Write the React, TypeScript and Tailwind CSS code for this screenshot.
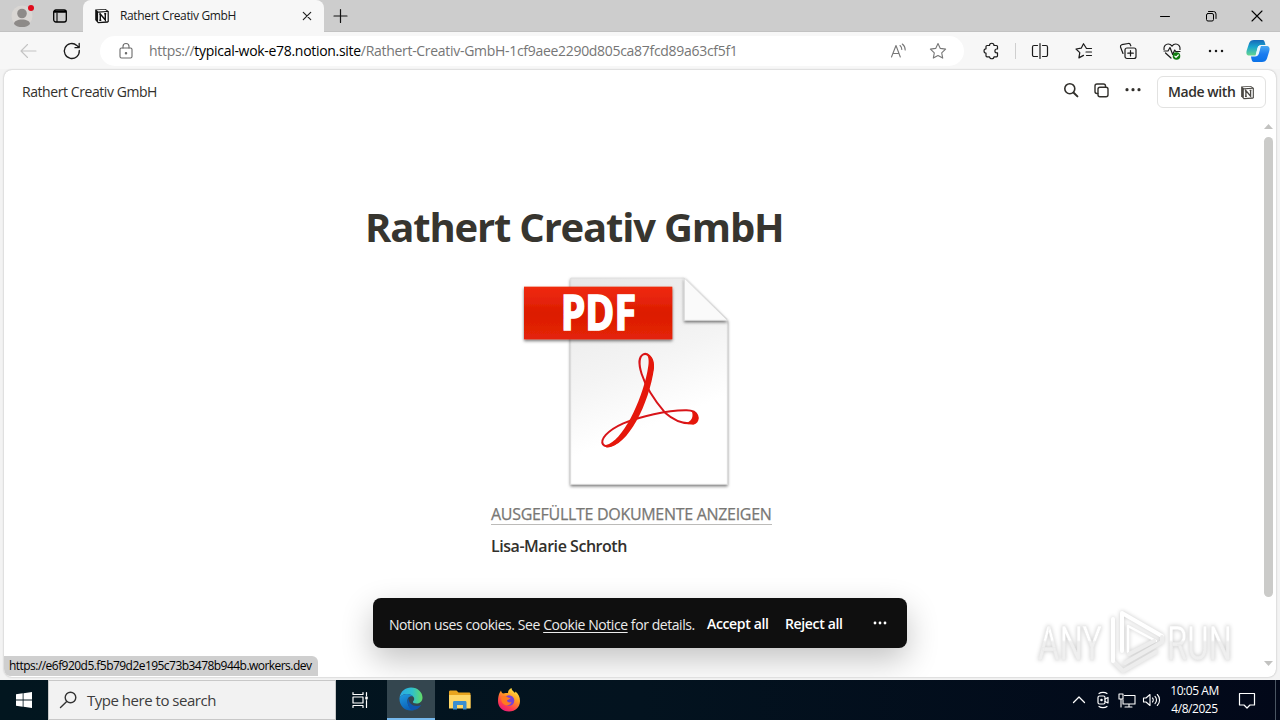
import React from "react";

type IconProps = { className?: string; children: React.ReactNode; w?: number; h?: number; sw?: number };

function Icon({ className = "", children, w = 20, h = 20, sw = 1.1 }: IconProps) {
  return (
    <svg
      className={"shrink-0 " + className}
      width={w}
      height={h}
      viewBox={`0 0 ${w} ${h}`}
      fill="none"
      stroke="currentColor"
      strokeWidth={sw}
      strokeLinecap="round"
      strokeLinejoin="round"
    >
      {children}
    </svg>
  );
}

function NotionMark({ size, ink }: { size: number; ink: string }) {
  return (
    <svg width={size} height={size} viewBox="0 0 16 16" className="shrink-0">
      <path d="M1.2 1.6 11.6 1l3.2 2.2v10.6l-1.2.9-9.6.6-2.8-3.2z" fill={ink} />
      <path d="M2.6 2.3 11.2 1.8l1.6 1.1-8.6.5z" fill="#fff" />
      <path d="M4.1 4.7 13.6 4.1v9.2l-9.5.6z" fill="#fff" />
      <path d="M6.3 12.2V6l5 6V5.6M5.2 6.1h1.6M10.2 5.7h2M5.3 12.2h2" stroke={ink} strokeWidth="1.4" fill="none" />
    </svg>
  );
}

function TabStrip() {
  return (
    <div className="flex h-8 shrink-0 border-b border-[#c2c2c2] bg-[#cdcdcd]">
      <div className="flex w-[83px] items-center rounded-br-lg pl-[11px]">
        <svg width="26" height="28" viewBox="0 0 26 28" className="shrink-0">
          <circle cx="11" cy="14" r="10.5" fill="#d9d6d3" />
          <circle cx="11" cy="11.5" r="4.8" fill="#8d8a88" />
          <path d="M3 22c0-3 3.5-4.5 8-4.5s8 1.500 8 4.500c-2 2.500-5 3-8 3s-6-.5-8-3z" fill="#8d8a88" />
          <circle cx="20" cy="6" r="3" fill="#e00b1c" />
        </svg>
        <Icon w={16} h={16} sw={1.3} className="ml-[15px] text-black">
          <rect x="1.700" y="2" width="12.600" height="12" rx="2.200" />
          <path d="M2.500 3.800h11" strokeWidth="2" />
          <path d="M5 5v8.500" strokeWidth="1.100" />
        </Icon>
      </div>
      <div className="flex h-8 w-[241px] items-center rounded-t-lg bg-[#f7f7f7] pl-[11px]">
        <NotionMark size={16} ink="#111" />
        <span className="ml-[10px] w-[170px] whitespace-nowrap text-[12px] leading-8 tracking-[-0.35px] text-[#1a1a1a]">
          Rathert Creativ GmbH
        </span>
        <Icon w={12} h={12} sw={1.2} className="ml-[11px] text-[#222]">
          <path d="M2.300 2.300l7.400 7.400M9.700 2.300L2.300 9.700" />
        </Icon>
      </div>
      <Icon w={16} h={16} sw={1.2} className="ml-2 mt-2 text-[#111]">
        <path d="M8.500 1.500v13M2 8h13" />
      </Icon>
      <div className="ml-auto flex items-center text-black">
        <Icon w={46} h={16} sw={1}>
          <path d="M18.500 8.500h9" />
        </Icon>
        <Icon w={46} h={16} sw={1}>
          <rect x="18.500" y="5.500" width="7" height="7.500" rx="1.500" />
          <path d="M20.500 3.500h5a2.500 2.500 0 0 1 2.500 2.500v4.500" />
        </Icon>
        <Icon w={46} h={16} sw={1.1}>
          <path d="M18 3l10 10M28 3L18 13" />
        </Icon>
      </div>
    </div>
  );
}

function Toolbar() {
  return (
    <div className="flex h-[37px] shrink-0 items-center bg-[#f7f7f7] text-[#1b1b1b]">
      <Icon className="ml-[18px] text-[#c4c4c4]">
        <path d="M18 10H3M9.500 3.500L3 10l6.500 6.500" />
      </Icon>
      <Icon className="ml-6 text-[#1b1b1b]" sw={1.3}>
        <path d="M17.300 9.500a7.500 7.500 0 1 1-2.500-5.100L17 6.500M17.200 2.500v4.200h-4.200" />
      </Icon>
      <div className="ml-[18px] flex h-[30px] w-[864px] items-center rounded-full bg-white">
        <Icon className="ml-4 text-[#6b6b6b]">
          <rect x="4" y="7" width="12" height="10" rx="1.500" />
          <path d="M7 7V5.500a3 3 0 0 1 6 0V7" />
          <circle cx="10" cy="12.300" r=".7" fill="currentColor" />
        </Icon>
        <span className="ml-[13px] w-[600px] whitespace-nowrap text-[14px] tracking-[-0.3px] text-[#767676]">
          https://<span className="text-black">typical-wok-e78.notion.site</span>
          /Rathert-Creativ-GmbH-1cf9aee2290d805ca87fcd89a63cf5f1
        </span>
        <Icon className="ml-auto text-[#777]">
          <path d="M3.500 16L8 4.500 12.300 16M5 12.500h6M12 4.500c1.200 1 1.800 2.300 1.800 4M14.300 3c1.900 1.500 2.900 3.500 2.900 6" />
        </Icon>
        <Icon className="ml-5 mr-4 text-[#777]">
          <path d="M10 2.500l2.300 4.900 5.300.7-3.900 3.700 1 5.300L10 14.500l-4.700 2.600 1-5.300-3.900-3.700 5.300-.7z" />
        </Icon>
      </div>
      <Icon className="ml-[18px]" sw={1.2}>
        <path d="M5 4.500h2.500c0-3 4.500-3 4.500 0h2.500a1 1 0 0 1 1 1V8h-.7a1.900 1.900 0 0 0 0 3.800h.7v3a1 1 0 0 1-1 1H12c0 2.600-4.500 2.600-4.500 0H5a1 1 0 0 1-1-1v-2.600c-2.600 0-2.600-4.400 0-4.400V5.500a1 1 0 0 1 1-1z" />
      </Icon>
      <div className="ml-[13px] h-4 w-px bg-[#cfcfcf]" />
      <Icon className="ml-[14px]" sw={1.2}>
        <path d="M7.500 4.500H4a1.500 1.500 0 0 0-1.500 1.500v8a1.500 1.500 0 0 0 1.500 1.500h3.500M12.500 4.500H16a1.500 1.500 0 0 1 1.500 1.500v8a1.500 1.500 0 0 1-1.500 1.500h-3.500M10 2.500v15" />
      </Icon>
      <Icon className="ml-6" sw={1.2}>
        <path d="M17.500 7.500h-5L9.500 2.700 7.200 7.200l-5.200.8 3.800 3.600-.9 5.300 4.600-2.500M12 11h5.500M12.500 14.500h5" />
      </Icon>
      <Icon className="ml-6" sw={1.2}>
        <rect x="7" y="7" width="11" height="10.500" rx="2" />
        <path d="M12.500 9.500v5.500M9.800 12.200h5.500M5 12.500l-2.500-6.500a2 2 0 0 1 1.300-2.300l6.500-1.200a2 2 0 0 1 2.200 1.500l.3.800" />
      </Icon>
      <Icon className="ml-6" sw={1.2}>
        <path d="M2 8.500C1.500 5 4 3 6.200 3 8 3 9.200 4 10 5.200 10.800 4 12 3 13.800 3 16 3 18.500 5 18 8.500M3.500 12l5.500 5M2 10h4l2-3.500 2.700 7 2-4.500 1 1.500H18" />
        <circle cx="14.500" cy="15" r="3.800" fill="#107c10" stroke="none" />
        <path d="M12.800 15.200l1.200 1.200 2.300-2.400" stroke="#fff" />
      </Icon>
      <Icon className="ml-6">
        <path d="M4 10h.01M10 10h.01M16 10h.01" strokeWidth="2.500" />
      </Icon>
      <svg width="26" height="26" viewBox="0 0 26 26" className="ml-[19px] shrink-0">
        <defs>
          <linearGradient id="cpA" x1="0" y1="0" x2="0" y2="1">
            <stop offset="0" stopColor="#1668b8" />
            <stop offset=".45" stopColor="#19a5ce" />
            <stop offset="1" stopColor="#67d68f" />
          </linearGradient>
          <linearGradient id="cpB" x1="0" y1="0" x2="0" y2="1">
            <stop offset="0" stopColor="#48a8f2" />
            <stop offset=".5" stopColor="#1c7cf0" />
            <stop offset="1" stopColor="#0a72e8" />
          </linearGradient>
        </defs>
        <path d="M9 2h8.500c2 0 2.300 2 3 5H16c-2.500 0-3 2-3.800 5l-1.700 5.500H4.500c-3 0-3.500-2-2.800-5L4 5.500C4.800 3 6.500 2 9 2z" fill="url(#cpA)" />
        <path d="M17 24H9c-2 0-2.500-2-3-5.500h4c2.500 0 3-2 3.800-4.500L15.500 8H21c3.500 0 4 2 3.300 5L22 20.500c-.8 2.500-2.500 3.500-5 3.500z" fill="url(#cpB)" />
        <path d="M15.800 8h-1.800c-1.300 0-1.600 1.500-3.200 9.500h1.500c1.300 0 1.600-1.500 3.500-9.500z" fill="#e9f7ff" />
      </svg>
    </div>
  );
}

function PdfPicture() {
  return (
    <svg width="250" height="240" viewBox="0 0 750 720" className="ml-[500px] shrink-0">
      <defs>
        <linearGradient id="sheet" x1="0" y1="0" x2="0.300" y2="1">
          <stop offset="0" stopColor="#e7e7e7" />
          <stop offset=".5" stopColor="#f4f4f4" />
          <stop offset=".8" stopColor="#fff" />
        </linearGradient>
        <linearGradient id="band" x1="0" y1="0" x2="0" y2="1">
          <stop offset="0" stopColor="#f02a10" />
          <stop offset=".5" stopColor="#dc1c02" />
          <stop offset="1" stopColor="#e42408" />
        </linearGradient>
        <filter id="soft" x="-10%" y="-10%" width="120%" height="125%">
          <feDropShadow dx="0" dy="5" stdDeviation="4" floodColor="#000" floodOpacity=".55" />
        </filter>
      </defs>
      <path d="M212 54H552L682 181V673H212z" fill="url(#sheet)" stroke="#d8d8d8" strokeWidth="2" filter="url(#soft)" />
      <path d="M553 54L682 181H553z" fill="#fafafa" stroke="#d4d4d4" strokeWidth="2" filter="url(#soft)" />
      <rect x="72" y="80" width="445" height="158" fill="url(#band)" filter="url(#soft)" />
      <text
        x="182"
        y="211"
        textLength="226"
        lengthAdjust="spacingAndGlyphs"
        fontFamily="Open Sans, sans-serif"
        fontWeight="700"
        fontSize="144"
        fill="#fff"
        stroke="#fff"
        strokeWidth="5"
      >
        PDF
      </text>
      <g fill="#e5170b">
        <path
          d="M330 558C365 555 440 420 457 330 462 290 440 278 430 283 405 295 420 370 495 458 530 488 560 492 580 488 600 480 598 452 560 451 500 450 420 470 370 490 320 512 300 540 309 553 314 560 325 560 330 558z"
          fill="none"
          stroke="#d81419"
          strokeWidth="6"
        />
        <path d="M318 562C382 566 448 430 462 325 464 300 455 284 438 280 449 292 447 312 442 335 424 425 368 543 318 555z" />
        <path d="M555 491C575 484 582 470 575 452 602 461 602 488 580 494z" />
      </g>
    </svg>
  );
}

function Watermark() {
  return (
    <svg width="244" height="74" viewBox="0 0 244 74" className="absolute bottom-0 right-0 [filter:drop-shadow(0_0_2px_rgba(0,0,0,0.22))]">
      <defs>
        <linearGradient id="wm" gradientUnits="userSpaceOnUse" x1="0" y1="18" x2="0" y2="56">
          <stop offset=".5" stopColor="#fff" />
          <stop offset=".55" stopColor="#efefef" />
        </linearGradient>
      </defs>
      <g fontFamily="Roboto, sans-serif" fontSize="49" fill="url(#wm)" stroke="#e8e8e8" strokeWidth=".5">
        <text x="6" y="57" textLength="64" lengthAdjust="spacingAndGlyphs">ANY</text>
        <text x="135" y="57" textLength="65" lengthAdjust="spacingAndGlyphs">RUN</text>
      </g>
      <g fill="none" stroke="#fff" strokeWidth="4" strokeLinejoin="round" strokeLinecap="round">
        <path d="M90 48V10l40 23" />
        <path d="M96 49V23l28 15" strokeWidth="2.500" />
        <path d="M130 34v5L93 60M122 38L97 51M81 16v42l10 10 33-19" stroke="#ededed" />
        <path d="M81 16v42" />
      </g>
    </svg>
  );
}

function PageHeader() {
  return (
    <div className="flex h-[45px] shrink-0 items-start text-[#32302c]">
      <span className="ml-[18px] mt-3 whitespace-nowrap text-[14px] leading-5 tracking-[-0.43px]">Rathert Creativ GmbH</span>
      <div className="ml-auto flex pt-[10px]">
        <Icon sw={1.6}>
          <circle cx="8.800" cy="8.700" r="5" />
          <path d="M12.700 12.700l3.700 3.700" strokeWidth="2" />
        </Icon>
        <Icon className="ml-[10px]" sw={1.4}>
          <rect x="7" y="7.200" width="10" height="9.600" rx="2" />
          <path d="M6.800 13.500H6a2 2 0 0 1-2-2V6a2 2 0 0 1 2-2h6.500a2 2 0 0 1 2 2v1" />
        </Icon>
        <Icon className="ml-3">
          <path d="M4 9.700h.01M10 9.700h.01M16 9.700h.01" strokeWidth="3.200" />
        </Icon>
      </div>
      <div className="ml-[14px] mr-[10px] mt-[6px] flex h-8 w-[109px] items-center rounded-md border border-[#e2e2e1] pl-[10px]">
        <span className="mb-px w-[69px] whitespace-nowrap text-[14px] font-semibold tracking-[-0.42px]">Made with</span>
        <span className="ml-[3px]"><NotionMark size={15} ink="#4a4844" /></span>
      </div>
    </div>
  );
}

function CookieBar() {
  return (
    <div className="absolute left-[369px] top-[528px] flex h-[50px] w-[534px] items-center whitespace-nowrap rounded-lg bg-[#0f0f0f] pl-4 text-[14px] text-white shadow-[0_12px_32px_rgba(0,0,0,0.24)]">
      <span className="mt-[2px] w-[318px] tracking-[-0.43px] text-[#ececec]">
        Notion uses cookies. See <span className="underline underline-offset-2">Cookie Notice</span> for details.
      </span>
      <span className="w-[78px] font-semibold tracking-[-0.35px]">Accept all</span>
      <span className="w-[85px] font-semibold tracking-[-0.35px]">Reject all</span>
      <Icon w={20} h={20}>
        <path d="M5 10h.01M10 10h.01M15 10h.01" strokeWidth="2.800" />
      </Icon>
    </div>
  );
}

function PageView() {
  return (
    <div className="flex h-[611px] shrink-0 flex-col bg-[#f3f3f3] px-1 pb-[3px] pt-px">
      <div className="relative flex h-[607px] flex-col overflow-hidden rounded-lg bg-white shadow-[0_0_2px_rgba(0,0,0,0.3)]">
        <PageHeader />
        <div className="flex flex-1">
          <div className="-ml-1 flex flex-1 flex-col">
            <h1 className="ml-[365px] mt-[84px] h-[56px] whitespace-nowrap text-[40px] font-bold leading-[56px] tracking-[-1.18px] text-[#37352f]">
              Rathert Creativ GmbH
            </h1>
            <div className="mt-[5px] flex"><PdfPicture /></div>
            <div className="ml-[491px] mt-1 flex flex-col items-start whitespace-nowrap text-[16px] leading-[20px]">
              <span className="border-b border-[#bcbbb9] font-medium tracking-[-0.3px] text-[#787774] [-webkit-text-stroke:0.25px_#787774]">AUSGEFÜLLTE DOKUMENTE ANZEIGEN</span>
              <span className="mt-[11px] font-semibold tracking-[-0.46px] text-[#32302c]">Lisa-Marie Schroth</span>
            </div>
          </div>
          <div className="mr-[3px] flex w-[9px] flex-col items-center pt-[9px] text-[#c2c2c0]">
            <svg width="9" height="5" className="fill-current"><path d="M0 5l4.500-5L9 5z" /></svg>
            <div className="mt-2 h-[460px] w-[9px] rounded-full bg-[#cbcbc9]" />
            <svg width="9" height="5" className="mt-[64px] fill-current"><path d="M0 0h9L4.500 5z" /></svg>
          </div>
        </div>
        <CookieBar />
        <div className="absolute bottom-px left-0 h-5 w-[314px] whitespace-nowrap rounded-bl-md rounded-tr-md bg-[#cfcfcf] pl-[5px] text-[12px] leading-5 tracking-[-0.54px] text-black">
          https://e6f920d5.f5b79d2e195c73b3478b944b.workers.dev
        </div>
        <Watermark />
      </div>
    </div>
  );
}

function EdgeLogo() {
  return (
    <svg width="24" height="24" viewBox="0 0 24 24">
      <defs>
        <linearGradient id="edT" x1="0" y1="0.500" x2="1" y2="0.500">
          <stop offset="0" stopColor="#2aa9e6" />
          <stop offset=".55" stopColor="#2fc0cc" />
          <stop offset="1" stopColor="#62dc66" />
        </linearGradient>
        <linearGradient id="edL" x1="0" y1="0" x2="0.400" y2="1">
          <stop offset="0" stopColor="#209be0" />
          <stop offset="1" stopColor="#0b62b8" />
        </linearGradient>
      </defs>
      <path d="M.5 11C1.500 4 6.500.5 12 .5c7 0 11.500 5 11.500 10 0 4-3 6-6 6-2.500 0-4-1-3.500-2 1-1 1.500-2 1-3.700C14 8.500 11 7 8 7 4 7 1.500 9 .5 11z" fill="url(#edT)" />
      <path d="M.5 11C2 8.500 5 7 8 7c3 0 5 1 6 2.500C9.500 8.500 8 12 8.500 15c.5 4 3 7.500 7 8-8 2.500-15.500-3-15-12z" fill="url(#edL)" />
      <path d="M9.500 11c-1.500 2.500-1.500 8 3 12 4 .5 8-1.500 9.700-5-3.200 1.700-8.200 1.300-10.700-1.500-1.500-1.700-2-3.500-2-5.500z" fill="#0f56ae" />
    </svg>
  );
}

function Firefox() {
  return (
    <svg width="24" height="24" viewBox="0 0 24 24">
      <defs>
        <linearGradient id="ffx" x1="0.800" y1="0" x2="0.250" y2="1">
          <stop offset="0" stopColor="#fff04a" />
          <stop offset=".4" stopColor="#ff9a22" />
          <stop offset=".75" stopColor="#ff3d4e" />
          <stop offset="1" stopColor="#e8177e" />
        </linearGradient>
      </defs>
      <path d="M2.500 5c1-1.500 1-2 1.500-2.500.5 2 1 2.500 2 3C8 4.500 10 5 11 5c0-2 1-4 3.500-5 0 2.500 2 3 3.500 5l.5-1.500C21.500 6 23 9 23 13c0 6-4.500 10.500-11 10.500S1 19 1 13c0-3 .5-6 1.500-8z" fill="url(#ffx)" />
      <circle cx="12" cy="12.500" r="5.300" fill="#7542d5" />
      <path d="M4.500 9c2-1.500 5-1 6.500.5l2.500.5c-.5 1.500-3 1.500-3.500 2.500 0 1.500 2 2.500 4.500 1.500-1 3-4 4-6.500 3-3-1-4.500-5-3.500-8z" fill="#ff7a20" />
    </svg>
  );
}

function Taskbar() {
  return (
    <div className="flex h-10 shrink-0 items-center bg-[linear-gradient(90deg,#02161f,#03131f_50%,#020819)] text-white">
      <div className="flex w-12 justify-center">
        <svg width="16" height="16" viewBox="0 0 16 16" fill="#fff">
          <path d="M0 2.200L6.700 1.300V7.600H0zM7.500 1.200L16 0v7.600H7.500zM0 8.400h6.700v6.300L0 13.800zM7.500 8.400H16V16l-8.500-1.200z" />
        </svg>
      </div>
      <div className="flex h-10 w-72 items-center border border-[#c8c8c8] bg-[#f2f2f2] pl-[9px] text-[#333]">
        <Icon w={20} h={20} sw={1.4}>
          <circle cx="12.500" cy="7.500" r="5.300" />
          <path d="M8.700 11.500L2.500 17.500" />
        </Icon>
        <span className="ml-[9px] whitespace-nowrap text-[15px] tracking-[-0.48px] text-[#3d3d3d]">Type here to search</span>
      </div>
      <div className="flex w-[51px] pl-[15px]">
        <Icon w={18} h={18} sw={1.2}>
          <path d="M2 1.500v2h10v-2M2 16.500v-2h10v2M15.500 1.500v3M15.500 9.500v7" />
          <rect x="2" y="6" width="10" height="6" />
          <path d="M15.500 6.500v1" strokeWidth="2.500" />
        </Icon>
      </div>
      <div className="flex h-10 w-12 items-center justify-center border-b-2 border-[#76b9ed] bg-[#34464f]"><EdgeLogo /></div>
      <div className="flex w-[49px] justify-center">
        <svg width="22" height="20" viewBox="0 0 22 20">
          <path d="M0 2C0 1 .5.500 1.500.500h6l2 2H20c1 0 1.500.5 1.500 1.500v14H0z" fill="#e9a51f" />
          <path d="M0 5h21.500v13.500H0z" fill="#ffd767" />
          <path d="M4 19.500v-7c0-1 .5-1.500 1.500-1.500h10.500c1 0 1.500.5 1.500 1.500v7h-3.500V15h-6v4.500z" fill="#3b8ed0" />
        </svg>
      </div>
      <div className="flex w-[50px] justify-center"><Firefox /></div>
      <div className="ml-auto flex items-center">
        <Icon w={24} h={20} sw={1.3}><path d="M6.500 12.500L12 7l5.500 5.500" /></Icon>
        <Icon w={24} h={20} sw={1.200}>
          <rect x="7" y="6" width="7" height="8" rx="1.500" />
          <path d="M14 9l3-1.500v5.500L14 11.500M8 3.500c2-1.500 6-1.500 8 0M8 16.500c2 1.500 6 1.500 8 0" />
          <circle cx="10.500" cy="10" r=".7" />
        </Icon>
        <Icon w={24} h={20} sw={1.100}>
          <path d="M9.500 5.500H20v8.500H8V10M14 14v3M10 17h7M4 4h4v5H4zM6 9v8" />
        </Icon>
        <Icon w={24} h={20} sw={1.100}>
          <path d="M4.500 8h2.500l4-3.500v11L7 12H4.500zM13.500 8c1 1 1 3 0 4M16 6.300c2 2 2 5.400 0 7.400M18.300 4.500c3 3 3 8 0 11" />
        </Icon>
        <div className="flex w-16 flex-col items-center whitespace-nowrap pr-px text-[12px] leading-[18px] tracking-[-0.45px]">
          <span>10:05 AM</span>
          <span>4/8/2025</span>
        </div>
        <Icon w={40} h={20} sw={1.200}>
          <path d="M12.500 3.500h15v11.500H23L20 18l-3-3h-4.500z" />
        </Icon>
        <div className="ml-2 mr-1 h-10 w-px bg-[#4a5562]" />
      </div>
    </div>
  );
}

export default function App() {
  return (
    <div className="flex h-[720px] w-[1280px] flex-col overflow-hidden bg-white font-['Open_Sans',sans-serif]">
      <TabStrip />
      <Toolbar />
      <PageView />
      <Taskbar />
    </div>
  );
}
